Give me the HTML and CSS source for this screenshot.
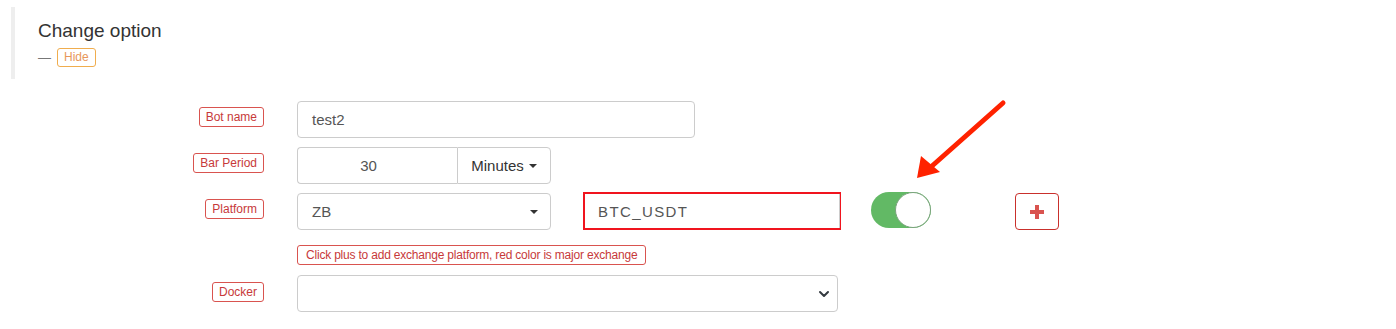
FILE: index.html
```html
<!DOCTYPE html>
<html>
<head>
<meta charset="utf-8">
<link rel="stylesheet" href="styles.css">
</head>
<body>
<div class="page">
  <div class="section-head">
    <div class="title">Change option</div>
    <div class="sub"><span class="dash">—</span><span class="badge-hide">Hide</span></div>
  </div>

  <div class="form">
    <div class="row">
      <div class="lab"><span class="tag">Bot name</span></div>
      <div class="ctl"><div class="input w398">test2</div></div>
    </div>
    <div class="row">
      <div class="lab"><span class="tag">Bar Period</span></div>
      <div class="ctl">
        <div class="group">
          <div class="input num">30</div>
          <div class="btn-drop">Minutes <span class="caret"></span></div>
        </div>
      </div>
    </div>
    <div class="row">
      <div class="lab"><span class="tag">Platform</span></div>
      <div class="ctl plat">
        <div class="input sel">ZB <span class="caret"></span></div>
        <div class="pair"><div class="pair-in">BTC_USDT</div></div>
        <div class="toggle"><div class="knob"></div></div>
        <div class="plus">
          <svg width="14" height="14" viewBox="0 0 14 14"><path d="M5 0h4v5h5v4H9v5H5V9H0V5h5z" fill="#d9534f"/></svg>
        </div>
      </div>
    </div>
    <div class="row help-row">
      <div class="lab"></div>
      <div class="ctl"><span class="tag help">Click plus to add exchange platform, red color is major exchange</span></div>
    </div>
    <div class="row docker-row">
      <div class="lab"><span class="tag">Docker</span></div>
      <div class="ctl">
        <div class="input w541 sel5">
          <svg class="chev" width="12" height="10" viewBox="0 0 12 10"><path d="M2 3l4 4 4-4" fill="none" stroke="#343a40" stroke-width="2" stroke-linecap="round" stroke-linejoin="round"/></svg>
        </div>
      </div>
    </div>
  </div>

  <svg class="arrow" width="110" height="100" viewBox="0 0 110 100">
    <line x1="103" y1="8" x2="32" y2="71" stroke="#ff2200" stroke-width="5" stroke-linecap="round"/>
    <polygon points="17,83 21,61 40,77" fill="#ff2200"/>
  </svg>
</div>
</body>
</html>
```

FILE: styles.css
```css
* { box-sizing: border-box; }
html, body { margin: 0; padding: 0; background: #fff; }
body { font-family: "Liberation Sans", Arial, sans-serif; color: #333; }
.page { position: relative; width: 1396px; height: 329px; padding-top: 7px; }

.section-head {
  margin-left: 11px;
  border-left: 4px solid #eeeeee;
  height: 72px;
  padding-left: 23px;
  padding-top: 13px;
}
.title { font-size: 19px; line-height: 22px; color: #333; }
.sub { display: flex; align-items: center; margin-top: 6px; }
.dash { color: #777; font-size: 13px; margin-right: 6px; }
.badge-hide {
  font-size: 12px; line-height: 17px; color: #e8975a;
  border: 1px solid #f0ad4e; border-radius: 3px; padding: 0 6px;
}

.form { margin-top: 22px; }
.row { display: grid; grid-template-columns: 264px 1fr; column-gap: 33px; margin-bottom: 9px; }
.lab { display: flex; justify-content: flex-end; align-items: flex-start; padding-top: 6px; }
.tag {
  display: inline-block; font-size: 12px; line-height: 18px; color: #c7393a;
  border: 1px solid #d9534f; border-radius: 3px; padding: 0 6px;
}
.ctl { display: flex; align-items: flex-start; }

.input {
  height: 37px; border: 1px solid #ccc; border-radius: 4px; background: #fff;
  font-size: 15px; color: #555; padding: 0 14px; display: flex; align-items: center;
}
.w398 { width: 398px; }
.w541 { width: 541px; }

.group { display: flex; }
.num { width: 160px; justify-content: center; padding-right: 32px; border-radius: 4px 0 0 4px; border-right: none; }
.btn-drop {
  width: 94px; height: 37px; border: 1px solid #ccc; border-radius: 0 4px 4px 0;
  font-size: 15px; color: #333; display: flex; align-items: center; justify-content: center;
}
.caret {
  display: inline-block; width: 0; height: 0; margin-left: 5px;
  border-top: 4px solid #333; border-left: 4px solid transparent; border-right: 4px solid transparent;
}
.sel { width: 254px; justify-content: space-between; padding-right: 12px; }

.plat { align-items: flex-start; }
.pair {
  margin-left: 32px; margin-top: -1px; width: 258px; height: 38px;
  border: 2px solid #f0141e;
}
.pair-in {
  height: 100%; width: 255px; border-right: 1px solid #ccc;
  font-size: 15px; color: #555; letter-spacing: 1.4px; padding-left: 13px;
  display: flex; align-items: center;
}
.toggle {
  margin-left: 30px; margin-top: -1px; width: 60px; height: 36px; border-radius: 18px;
  background: #62b965; position: relative;
}
.knob {
  position: absolute; right: 0; top: 0; width: 36px; height: 36px; border-radius: 50%;
  background: #fff; border: 1px solid #7aa37c;
}
.plus {
  margin-left: 84px; width: 44px; height: 37px; border: 1px solid #c9302c; border-radius: 4px;
  display: flex; align-items: center; justify-content: center;
}

.help-row { margin-top: 15px; margin-bottom: 10px; }
.help { line-height: 18px; padding: 0 8px; letter-spacing: -0.2px; }
.docker-row .lab { padding-top: 7px; }
.sel5 { justify-content: flex-end; padding-right: 7px; }

.arrow { position: absolute; left: 900px; top: 95px; }
```
